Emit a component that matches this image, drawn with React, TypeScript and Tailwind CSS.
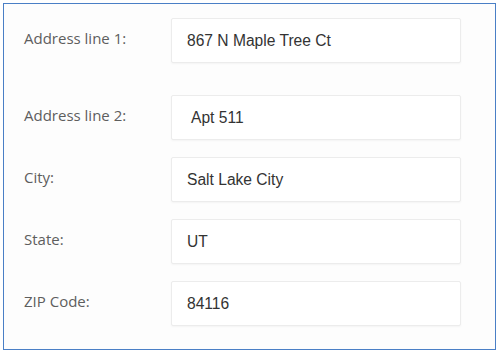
import React from 'react';

const FIELDS = [
  { label: 'Address line 1:', value: '867 N Maple Tree Ct', mt: 'mt-[14px]', indent: 'pl-[15px]' },
  { label: 'Address line 2:', value: 'Apt 511', mt: 'mt-[32px]', indent: 'pl-[19px]' },
  { label: 'City:', value: 'Salt Lake City', mt: 'mt-[17px]', indent: 'pl-[15px]' },
  { label: 'State:', value: 'UT', mt: 'mt-[17px]', indent: 'pl-[15px]' },
  { label: 'ZIP Code:', value: '84116', mt: 'mt-[17px]', indent: 'pl-[15px]' },
];

export default function App() {
  return (
    <div className="w-[500px] h-[353px] bg-white p-[3px]">
      <div className="w-[493px] h-[347px] border border-[#4a7fc6] bg-[#fdfdfd] flex flex-col">
        {FIELDS.map((f) => (
          <div key={f.label} className={`flex items-center ${f.mt}`}>
            <label className="w-[167px] shrink-0 pl-[20px] mb-[5px] text-[15px] text-[#5e5e5e] font-['Open_Sans',sans-serif]">
              {f.label}
            </label>
            <div
              className={`w-[290px] h-[45px] flex items-center ${f.indent} bg-white border border-[#ececec] rounded-[2px] shadow-[0_1px_2px_rgba(0,0,0,0.04)] text-[15.6px] text-[#333] font-['Liberation_Sans',Arial,sans-serif]`}
            >
              {f.value}
            </div>
          </div>
        ))}
      </div>
    </div>
  );
}
